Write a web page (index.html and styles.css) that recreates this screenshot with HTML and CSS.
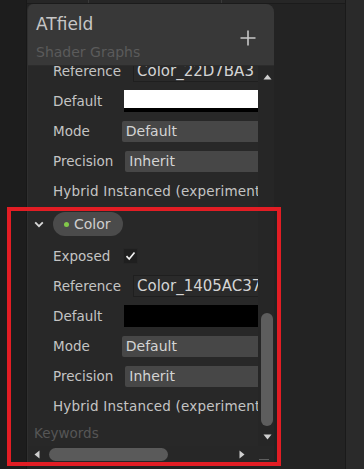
FILE: index.html
```html
<!DOCTYPE html>
<html>
<head>
<meta charset="utf-8">
<link rel="stylesheet" href="styles.css">
</head>
<body>
<div class="app">
  <div class="gutter"></div>
  <div class="center">
    <div class="topbar"><span class="tick t1"></span><span class="tick t2"></span></div>
    <div class="stage">
      <div class="panel">
        <div class="header">
          <div class="titles">
            <div class="title">ATfield</div>
            <div class="subtitle">Shader Graphs</div>
          </div>
          <svg class="plus" width="16" height="16" viewBox="0 0 16 16"><path d="M8 0.5V15.5M0.5 8H15.5" stroke="#c8c8c8" stroke-width="1.6"/></svg>
        </div>
        <div class="main">
          <div class="viewport">
            <div class="list">
              <div class="row"><span class="label">Reference</span><span class="field ref">Color_22D7BA3</span></div>
              <div class="row"><span class="label">Default</span><span class="swatch white dflt"><span class="alpha"></span></span></div>
              <div class="row"><span class="label">Mode</span><span class="drop mode">Default</span></div>
              <div class="row"><span class="label">Precision</span><span class="drop prec">Inherit</span></div>
              <div class="row"><span class="label spaced">Hybrid Instanced (experimental)</span></div>
              <div class="row prop">
                <svg class="chev" width="10" height="7" viewBox="0 0 10 7"><path d="M1.2 1.3L5 5.2L8.8 1.3" fill="none" stroke="#d8d8d8" stroke-width="1.8"/></svg>
                <span class="pill"><span class="dot"></span>Color</span>
              </div>
              <div class="row"><span class="label">Exposed</span>
                <span class="check"><svg width="11" height="10" viewBox="0 0 11 10"><path d="M1.5 5.2L4.2 8L9.5 1.5" fill="none" stroke="#f0f0f0" stroke-width="1.7"/></svg></span>
              </div>
              <div class="row"><span class="label">Reference</span><span class="field ref">Color_1405AC37</span></div>
              <div class="row"><span class="label">Default</span><span class="swatch black dflt"><span class="alpha"></span></span></div>
              <div class="row"><span class="label">Mode</span><span class="drop mode">Default</span></div>
              <div class="row"><span class="label">Precision</span><span class="drop prec">Inherit</span></div>
              <div class="row"><span class="label spaced">Hybrid Instanced (experimental)</span></div>
              <div class="row kw"><span class="section">Keywords</span></div>
            </div>
          </div>
          <div class="vscroll">
            <svg class="arrow" width="9" height="6" viewBox="0 0 9 6"><path d="M4.5 0.5L8.5 5.5H0.5Z" fill="#cfcfcf"/></svg>
            <div class="vtrack"><div class="vthumb"></div></div>
            <svg class="arrow" width="9" height="6" viewBox="0 0 9 6"><path d="M0.5 0.5H8.5L4.5 5.5Z" fill="#cfcfcf"/></svg>
          </div>
        </div>
        <div class="hscroll">
          <svg class="harrow" width="6" height="9" viewBox="0 0 6 9"><path d="M5.5 0.5V8.5L0.5 4.5Z" fill="#cfcfcf"/></svg>
          <div class="htrack"><div class="hthumb"></div></div>
          <svg class="harrow" width="6" height="9" viewBox="0 0 6 9"><path d="M0.5 0.5L5.5 4.5L0.5 8.5Z" fill="#cfcfcf"/></svg>
          <div class="corner"><span class="grip"></span></div>
        </div>
      </div>
      <div class="void"></div>
    </div>
  </div>
  <div class="sidebar"></div>
  <div class="highlight"></div>
</div>
</body>
</html>
```
FILE: styles.css
```css
* { box-sizing: border-box; }
html, body { margin: 0; padding: 0; }
body {
  width: 364px;
  height: 469px;
  overflow: hidden;
  background: #212121;
  font-family: "DejaVu Sans", Verdana, sans-serif;
  color: #c4c4c4;
}
.app {
  position: relative;
  display: flex;
  width: 364px;
  height: 469px;
}
.gutter {
  width: 27px;
  background: #1d1d1d;
  border-right: 1px solid #181818;
}
.center {
  width: 318px;
  display: flex;
  flex-direction: column;
}
.topbar {
  height: 4px;
  background: #262626;
  border-bottom: 1px solid #1b1b1b;
  display: flex;
}
.tick { width: 1px; height: 3px; background: #3a3a3a; }
.t1 { margin-left: 61px; }
.t2 { margin-left: 132px; }
.stage {
  flex: 1;
  display: flex;
  background: #232323;
}
.panel {
  width: 247px;
  height: 459px;
  display: flex;
  flex-direction: column;
  background: #282828;
  border-radius: 6px 8px 0 0;
  overflow: hidden;
  border-left: 1px solid #2f2f2f;
}
.header {
  height: 62px;
  background: #383838;
  display: flex;
  justify-content: space-between;
  padding: 9px 18px 0 8px;
  border-bottom: 1px solid #2c2c2c;
}
.title { font-size: 17px; line-height: 22px; color: #c6c6c6; }
.subtitle { font-size: 14px; line-height: 18px; margin-top: 8px; color: #5b5b5b; }
.plus { margin-top: 17px; }
.main {
  height: 380px;
  display: flex;
}
.viewport {
  width: 231px;
  overflow: hidden;
}
.list {
  margin-top: -10px;
  width: 231px;
}
.row {
  height: 30px;
  display: flex;
  align-items: center;
  padding-left: 25px;
  font-size: 13.5px;
  white-space: nowrap;
}
.label { color: #c4c4c4; flex: none; }
.spaced { letter-spacing: 0.2px; }
.field {
  flex: none;
  height: 22px;
  width: 160px;
  background: #2a2a2a;
  border: 1px solid #1f1f1f;
  border-right: none;
  color: #d4d4d4;
  font-size: 15px;
  line-height: 20px;
  padding-left: 3px;
}
.ref { margin-left: 12px; }
.swatch {
  flex: none;
  width: 137px;
  height: 22px;
  display: flex;
  flex-direction: column;
  justify-content: flex-end;
}
.white { background: #ffffff; }
.black { background: #000000; }
.alpha { height: 4px; background: #000; }
.dflt { margin-left: 22px; }
.drop {
  flex: none;
  height: 21px;
  width: 150px;
  background: #474747;
  border-radius: 2px 0 0 2px;
  color: #d4d4d4;
  font-size: 14px;
  line-height: 21px;
  padding-left: 4px;
}
.mode { margin-left: 32px; }
.prec { margin-left: 12px; }
.prop {
  height: 35px;
  padding-left: 6px;
  padding-top: 1px;
}
.chev { margin-right: 9px; }
.pill {
  height: 24px;
  width: 70px;
  border-radius: 12px;
  background: #4b4b4b;
  display: flex;
  align-items: center;
  padding-left: 11px;
  font-size: 14px;
  color: #cfcfcf;
}
.dot {
  width: 5px;
  height: 5px;
  border-radius: 50%;
  background: #82c84a;
  margin-right: 5px;
}
.check {
  width: 15px;
  height: 16px;
  margin-left: 13px;
  background: #1f1f1f;
  border: 1px solid #262626;
  display: flex;
  align-items: center;
  justify-content: center;
}
.kw {
  height: 25px;
  padding-left: 6px;
  padding-bottom: 2px;
}
.section { color: #565656; font-size: 13.5px; }
.vscroll {
  width: 16px;
  background: #262626;
  display: flex;
  flex-direction: column;
  align-items: center;
  padding: 8px 0 6px 0;
}
.vscroll .arrow { flex: none; margin-left: 2px; }
.vtrack {
  flex: 1;
  width: 13px;
  display: flex;
  flex-direction: column;
  justify-content: flex-end;
  padding: 0 0 8px 1px;
}
.vthumb {
  height: 113px;
  width: 12px;
  border-radius: 6px;
  background: #5d5d5d;
}
.hscroll {
  height: 17px;
  display: flex;
  align-items: center;
  padding-left: 6px;
  background: #272727;
}
.harrow { flex: none; }
.htrack {
  width: 199px;
  height: 17px;
  display: flex;
  align-items: center;
  padding-left: 9px;
}
.hthumb {
  width: 119px;
  height: 13px;
  border-radius: 7px;
  background: #5a5a5a;
}
.corner {
  flex: 1;
  height: 17px;
  display: flex;
  align-items: flex-end;
  justify-content: center;
  padding-bottom: 3px;
  padding-left: 8px;
}
.grip { width: 10px; height: 1px; background: #5f5f5f; }
.void { flex: 1; }
.sidebar {
  width: 19px;
  background: #2a2a2a;
  border-left: 1px solid #1a1a1a;
}
.highlight {
  position: absolute;
  left: 7px;
  top: 207px;
  width: 274px;
  height: 259px;
  border: 4px solid #e21d24;
  pointer-events: none;
}
```
